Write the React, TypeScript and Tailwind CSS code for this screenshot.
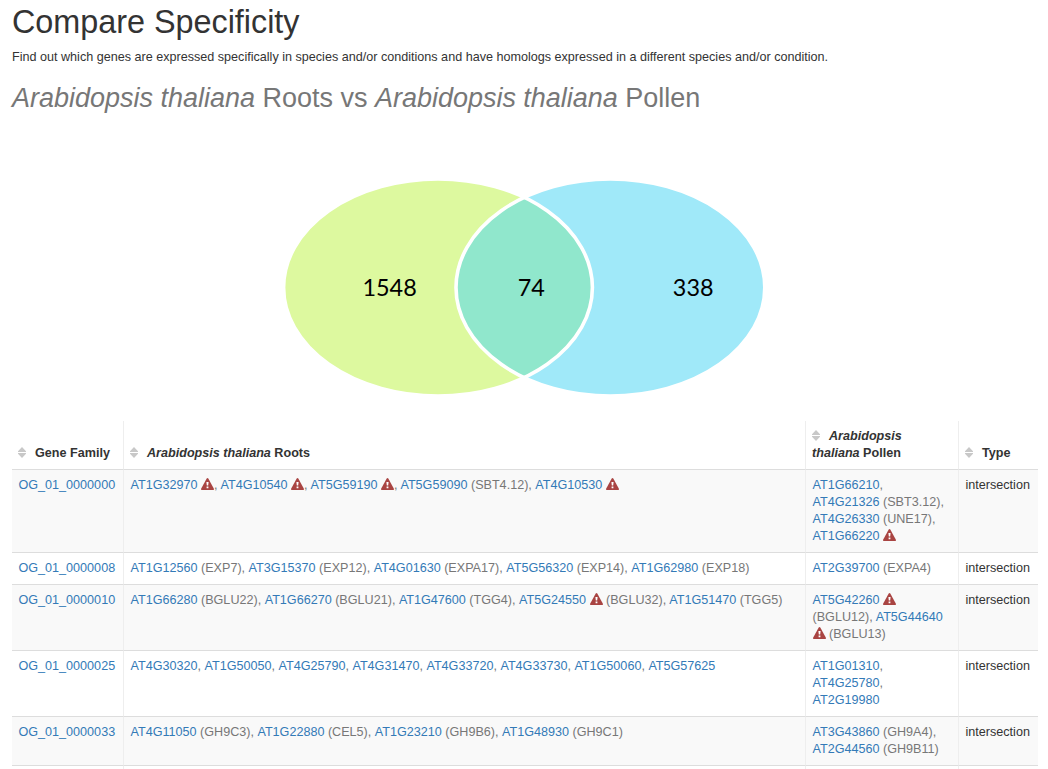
import React from "react";

type Gene = { id: string; warn?: boolean; alias?: string };
type Row = { family: string; roots: Gene[]; pollen: Gene[] };

const g = (id: string, alias?: string, warn?: boolean): Gene => ({ id, alias, warn });

const rows: Row[] = [
  {
    family: "OG_01_0000000",
    roots: [
      g("AT1G32970", undefined, true),
      g("AT4G10540", undefined, true),
      g("AT5G59190", undefined, true),
      g("AT5G59090", "SBT4.12"),
      g("AT4G10530", undefined, true),
    ],
    pollen: [
      g("AT1G66210"),
      g("AT4G21326", "SBT3.12"),
      g("AT4G26330", "UNE17"),
      g("AT1G66220", undefined, true),
    ],
  },
  {
    family: "OG_01_0000008",
    roots: [
      g("AT1G12560", "EXP7"),
      g("AT3G15370", "EXP12"),
      g("AT4G01630", "EXPA17"),
      g("AT5G56320", "EXP14"),
      g("AT1G62980", "EXP18"),
    ],
    pollen: [g("AT2G39700", "EXPA4")],
  },
  {
    family: "OG_01_0000010",
    roots: [
      g("AT1G66280", "BGLU22"),
      g("AT1G66270", "BGLU21"),
      g("AT1G47600", "TGG4"),
      g("AT5G24550", "BGLU32", true),
      g("AT1G51470", "TGG5"),
    ],
    pollen: [g("AT5G42260", "BGLU12", true), g("AT5G44640", "BGLU13", true)],
  },
  {
    family: "OG_01_0000025",
    roots: [
      g("AT4G30320"),
      g("AT1G50050"),
      g("AT4G25790"),
      g("AT4G31470"),
      g("AT4G33720"),
      g("AT4G33730"),
      g("AT1G50060"),
      g("AT5G57625"),
    ],
    pollen: [g("AT1G01310"), g("AT4G25780"), g("AT2G19980")],
  },
  {
    family: "OG_01_0000033",
    roots: [
      g("AT4G11050", "GH9C3"),
      g("AT1G22880", "CEL5"),
      g("AT1G23210", "GH9B6"),
      g("AT1G48930", "GH9C1"),
    ],
    pollen: [g("AT3G43860", "GH9A4"), g("AT2G44560", "GH9B11")],
  },
];

function Warning() {
  return (
    <svg viewBox="0 0 13 12" className="inline-block h-[12px] w-[13px] align-[-1px]">
      <path
        d="M5.7.5Q6.5-.4 7.3.5L12.9 10.8Q13.2 12 12.3 12H.7Q-.2 12 .1 10.8Z"
        fill="#a94442"
      />
      <path d="M5.4 4H7.6L7.2 7.6H5.8ZM5.6 8.6H7.4V10.2H5.6Z" fill="#fff" />
    </svg>
  );
}

function SortIcon() {
  return (
    <svg viewBox="0 0 8 11" className="mr-[9px] inline-block h-[11px] w-[8px] align-[-1px]">
      <path d="M4 0L8 4.2V5H0V4.2ZM0 6H8V6.8L4 11L0 6.8Z" fill="#c8c8c8" />
    </svg>
  );
}

function Genes({ genes }: { genes: Gene[] }) {
  return (
    <>
      {genes.map((gene, i) => (
        <React.Fragment key={gene.id}>
          <a className="text-[#337ab7]">{gene.id}</a>
          {gene.warn && (
            <>
              {" "}
              <Warning />
            </>
          )}
          {gene.alias && ` (${gene.alias})`}
          {i < genes.length - 1 && (
            <>
              <span className={gene.warn ? "mr-[0.2px]" : "mr-[0.7px]"}>,</span>{" "}
            </>
          )}
        </React.Fragment>
      ))}
    </>
  );
}

function Venn() {
  return (
    <svg viewBox="0 0 1048 240" className="block h-[240px] w-[1048px]">
      <ellipse cx="438" cy="117.5" rx="154.4" ry="108.6" fill="#ddf99f" />
      <ellipse cx="610.4" cy="117.5" rx="154.4" ry="108.6" fill="#a0e9f9" />
      <clipPath id="left-set">
        <ellipse cx="438" cy="117.5" rx="154.4" ry="108.6" />
      </clipPath>
      <ellipse cx="610.4" cy="117.5" rx="154.4" ry="108.6" fill="#90e7cc" clipPath="url(#left-set)" />
      <g fill="none" stroke="#fff" strokeWidth="3.6">
        <ellipse cx="438" cy="117.5" rx="154.4" ry="108.6" />
        <ellipse cx="610.4" cy="117.5" rx="154.4" ry="108.6" />
      </g>
      <g className="font-['Lato',sans-serif] text-[23.4px]" textAnchor="middle" fill="#000">
        <text x="389.6" y="126">1548</text>
        <text x="531.3" y="126">74</text>
        <text x="693.2" y="126">338</text>
      </g>
    </svg>
  );
}

const cell = "border-b border-b-[#ddd] pl-[6.5px] pr-[7px] py-[7px] align-top";
const divided = "border-r border-r-[#eee]";
const head = "border-b border-b-[#ddd] py-[7px] px-[6px] text-left align-bottom font-bold";

export default function App() {
  return (
    <div className="h-[769px] w-[1048px] overflow-hidden bg-white font-['Liberation_Sans',Arial,sans-serif] text-[12.6px] leading-[17px] text-[#333]">
      <h1 className="pt-[4px] pl-[12px] text-[32.4px] leading-[36px] tracking-[-0.03px]">Compare Specificity</h1>
      <p className="mt-[9px] pl-[12px]">
        Find out which genes are expressed specifically in species and/or conditions and have homologs
        expressed in a different species and/or condition.
      </p>
      <h2 className="mt-[17px] h-[87px] pl-[12px] text-[27px] leading-[31px] tracking-[-0.01px] text-[#777]">
        <em>Arabidopsis thaliana</em> Roots vs <em>Arabidopsis thaliana</em> Pollen
      </h2>
      <Venn />
      <table className="mt-[11px] ml-[12px] w-[1026px] table-fixed border-separate border-spacing-0">
        <colgroup>
          <col className="w-[112px]" />
          <col className="w-[682px]" />
          <col className="w-[153px]" />
          <col className="w-[79px]" />
        </colgroup>
        <thead>
          <tr>
            <th className={`${head} ${divided}`}>
              <SortIcon />
              Gene Family
            </th>
            <th className={`${head} ${divided}`}>
              <SortIcon />
              <em>Arabidopsis thaliana</em> Roots
            </th>
            <th className={`${head} ${divided}`}>
              <SortIcon />
              <em>Arabidopsis<br />thaliana</em> Pollen
            </th>
            <th className={head}>
              <SortIcon />
              Type
            </th>
          </tr>
        </thead>
        <tbody className="text-[#777]">
          {rows.map((row) => (
            <tr key={row.family} className="odd:bg-[#f9f9f9]">
              <td className={`${cell} ${divided} text-[#337ab7]`}>{row.family}</td>
              <td className={`${cell} ${divided}`}>
                <Genes genes={row.roots} />
              </td>
              <td className={`${cell} ${divided}`}>
                <Genes genes={row.pollen} />
              </td>
              <td className={`${cell} text-[#333]`}>intersection</td>
            </tr>
          ))}
          <tr className="h-[17px]">
            <td className={divided} />
            <td className={divided} />
            <td className={divided} />
            <td />
          </tr>
        </tbody>
      </table>
    </div>
  );
}
